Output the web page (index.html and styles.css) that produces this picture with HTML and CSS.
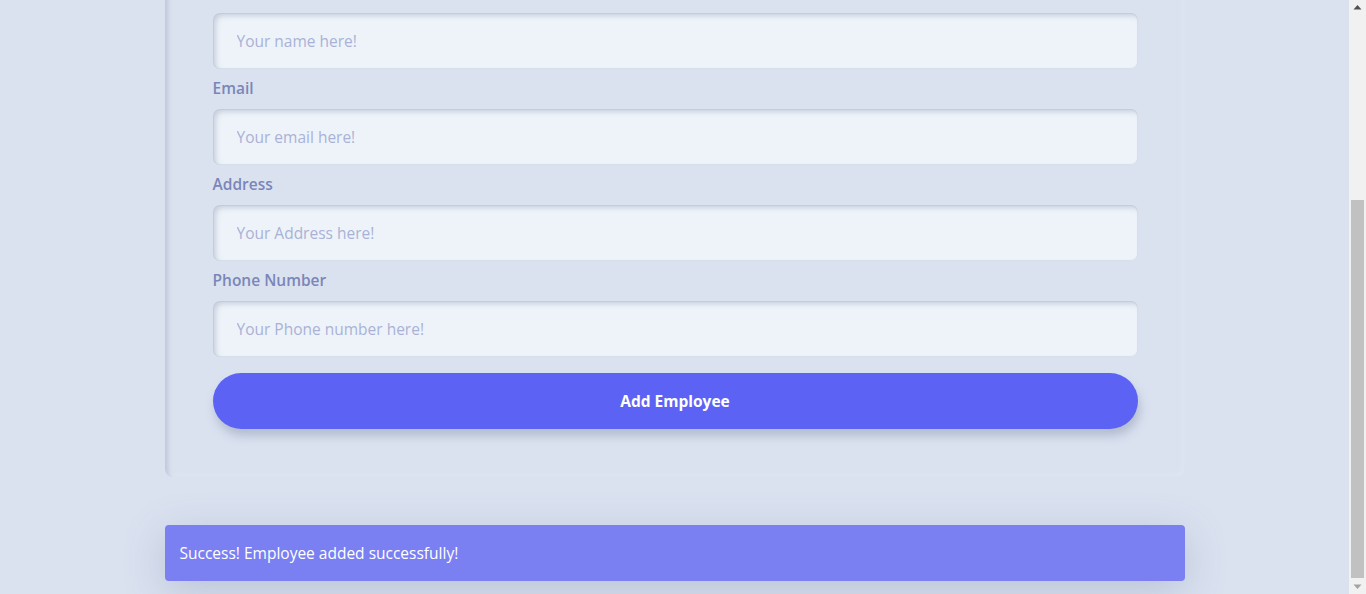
FILE: index.html
```html
<!DOCTYPE html>
<html lang="en">
<head>
<meta charset="utf-8">
<title>Add Employee</title>
<link rel="stylesheet" href="styles.css">
</head>
<body>
<div class="viewport">
  <main class="page">
    <section class="card">
      <form class="form">
        <input class="field" id="name" type="text" placeholder="Your name here!" aria-label="Name">
        <label class="label" for="email">Email</label>
        <input class="field" id="email" type="email" placeholder="Your email here!">
        <label class="label" for="address">Address</label>
        <input class="field" id="address" type="text" placeholder="Your Address here!">
        <label class="label" for="phone">Phone Number</label>
        <input class="field" id="phone" type="text" placeholder="Your Phone number here!">
        <button class="btn" type="button">Add Employee</button>
      </form>
    </section>
    <div class="toast">Success! Employee added successfully!</div>
  </main>
  <div class="scrollbar" aria-hidden="true">
    <div class="sb-btn">
      <svg width="9" height="6" viewBox="0 0 9 6"><path d="M0.5 5.5 L4.5 1 L8.5 5.5 Z" fill="#505050"/></svg>
    </div>
    <div class="sb-track">
      <div class="sb-thumb"></div>
    </div>
    <div class="sb-btn">
      <svg width="9" height="6" viewBox="0 0 9 6"><path d="M0.5 0.5 L4.5 5 L8.5 0.5 Z" fill="#a3a3a3"/></svg>
    </div>
  </div>
</div>
</body>
</html>
```

FILE: styles.css
```css
html, body {
  margin: 0;
  padding: 0;
  height: 594px;
  overflow: hidden;
  background: #dae2f0;
}
body {
  font-family: "Open Sans", "Noto Sans", sans-serif;
  font-size: 16px;
  color: #7b86b8;
}
.viewport {
  display: flex;
  height: 594px;
}
.page {
  flex: 1;
  min-width: 0;
  display: flex;
  flex-direction: column;
  align-items: center;
  gap: 48px;
  padding: 0 0 13px;
  overflow: hidden;
}
.card {
  box-sizing: border-box;
  width: 1020px;
  margin-top: -24px;
  border-radius: 8px;
  padding: 37px 47px 48px 48px;
  box-shadow: inset 3px 3px 4px rgba(160, 170, 190, 0.45),
              inset -3px -3px 4px rgba(226, 233, 244, 0.5);
}
.form {
  display: flex;
  flex-direction: column;
}
.label {
  display: block;
  font-weight: 600;
  font-size: 15.5px;
  line-height: 24px;
  margin: 7px 0 9px;
  color: #7b86b8;
}
.field {
  box-sizing: border-box;
  height: 56px;
  width: 100%;
  border: none;
  outline: none;
  border-radius: 7px;
  background: #eef3f9;
  padding: 0 24px;
  font-family: inherit;
  font-size: 15.5px;
  color: #5d6690;
  box-shadow: inset 3px 3px 5px rgba(170, 180, 200, 0.55),
              inset 0 0 0 1px rgba(205, 213, 230, 0.6);
}
.field::placeholder {
  color: #a9b2d6;
}
.btn {
  margin-top: 16px;
  height: 56px;
  width: 100%;
  border: none;
  border-radius: 28px;
  background: #5c63f4;
  color: #ffffff;
  font-family: inherit;
  font-size: 15.5px;
  font-weight: 700;
  box-shadow: 2px 7px 10px rgba(110, 120, 150, 0.35);
  cursor: pointer;
}
.toast {
  box-sizing: border-box;
  width: 1020px;
  height: 56px;
  flex: none;
  display: flex;
  align-items: center;
  padding: 0 15px;
  border-radius: 4px;
  background: #7a80f2;
  color: #ffffff;
  font-size: 15.5px;
  box-shadow: 0 10px 40px rgba(90, 105, 140, 0.25);
}
.scrollbar {
  width: 17px;
  flex: none;
  background: #f1f1f1;
  display: flex;
  flex-direction: column;
}
.sb-btn {
  height: 14px;
  flex: none;
  display: flex;
  align-items: center;
  justify-content: center;
}
.sb-track {
  flex: 1;
  display: flex;
  flex-direction: column;
  justify-content: flex-end;
  padding: 0 2px;
}
.sb-thumb {
  height: 378px;
  background: #c1c1c1;
  margin-bottom: 2px;
}
```
